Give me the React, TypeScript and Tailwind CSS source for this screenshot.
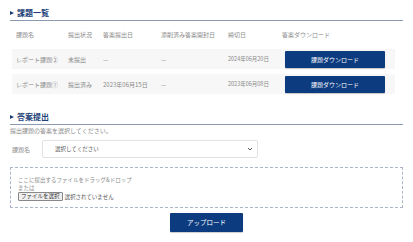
import React from "react";

const font = { fontFamily: '"Noto Sans CJK JP", "Noto Sans", sans-serif' };

function SectionTitle({ children }: { children: React.ReactNode }) {
  return (
    <div className="flex items-center gap-[3px] border-b border-[#8b9bb0] pb-[2px] h-[14px]">
      <span className="w-0 h-0 border-y-[2.5px] border-y-transparent border-l-[4px] border-l-[#1b3f78] ml-[0px]" />
      <span className="text-[8px] font-bold text-[#1b3f78] leading-none">{children}</span>
    </div>
  );
}

const rows = [
  { name: "レポート課題②", status: "未提出", submitted: "—", opened: "—", deadline: "2024年06月20日" },
  { name: "レポート課題①", status: "提出済み", submitted: "2023年06月15日", opened: "—", deadline: "2023年06月08日" },
];

const cols = "grid grid-cols-[52px_35px_58px_67px_54px_111px] items-center";

export default function App() {
  return (
    <div className="w-[413px] h-[242px] bg-white text-[#8a8a8a] px-[10px] pt-[7px]" style={font}>
      <SectionTitle>課題一覧</SectionTitle>
      <div className="pl-[2px] pr-[8px]">
        <div className={`${cols} h-[18px] mt-[4px] text-[6px] pl-[4px]`}>
          <span>課題名</span>
          <span>提出状況</span>
          <span>答案提出日</span>
          <span>添削済み答案開封日</span>
          <span>締切日</span>
          <span>答案ダウンロード</span>
        </div>
        <div className="flex flex-col gap-[5px] mt-[6px]">
          {rows.map((r) => (
            <div key={r.name} className={`${cols} h-[20px] bg-[#f7f7f7] text-[6px] pl-[4px]`}>
              <span>{r.name}</span>
              <span>{r.status}</span>
              <span>{r.submitted}</span>
              <span>{r.opened}</span>
              <span className="text-[5.5px]">{r.deadline}</span>
              <span className="pl-[3px]">
                <button className="w-[100px] h-[17px] bg-[#0c3b7f] text-white text-[6px] rounded-[1px] shadow-[0_1px_1px_rgba(0,0,0,0.2)]">
                  課題ダウンロード
                </button>
              </span>
            </div>
          ))}
        </div>
      </div>

      <div className="mt-[17px]">
        <SectionTitle>答案提出</SectionTitle>
      </div>
      <div className="text-[6px] mt-[2px] leading-[8px]">提出課題の答案を選択してください。</div>
      <div className="flex items-center mt-[5px] h-[18px]">
        <span className="text-[6px] w-[32px] pl-[2px]">課題名</span>
        <div className="w-[216px] h-[18px] border border-[#e2e2e2] rounded-[2px] flex items-center justify-between pl-[12px] pr-[4px] text-[5.5px] text-[#555]">
          <span>選択してください</span>
          <svg width="6" height="4" viewBox="0 0 6 4"><path d="M1 1 L3 3 L5 1" stroke="#555" strokeWidth="1" fill="none" /></svg>
        </div>
      </div>
      <div className="mt-[9px] h-[41px] border border-dashed border-[#a9b5c5] px-[7px] pt-[8px] text-[5.5px] leading-[8px]">
        <div>ここに提出するファイルをドラッグ&amp;ドロップ</div>
        <div>または</div>
        <div className="flex items-center gap-[2px] mt-[0px]">
          <span className="border border-[#888] bg-[#efefef] text-[#333] px-[2px] leading-[7px] rounded-[1px]">ファイルを選択</span>
          <span className="text-[#555]">選択されていません</span>
        </div>
      </div>
      <div className="flex justify-center mt-[5px] pr-[0px]">
        <button className="w-[73px] h-[19px] bg-[#0c3b7f] text-white text-[6.5px] rounded-[1px] shadow-[0_1px_1px_rgba(0,0,0,0.2)]">
          アップロード
        </button>
      </div>
    </div>
  );
}
